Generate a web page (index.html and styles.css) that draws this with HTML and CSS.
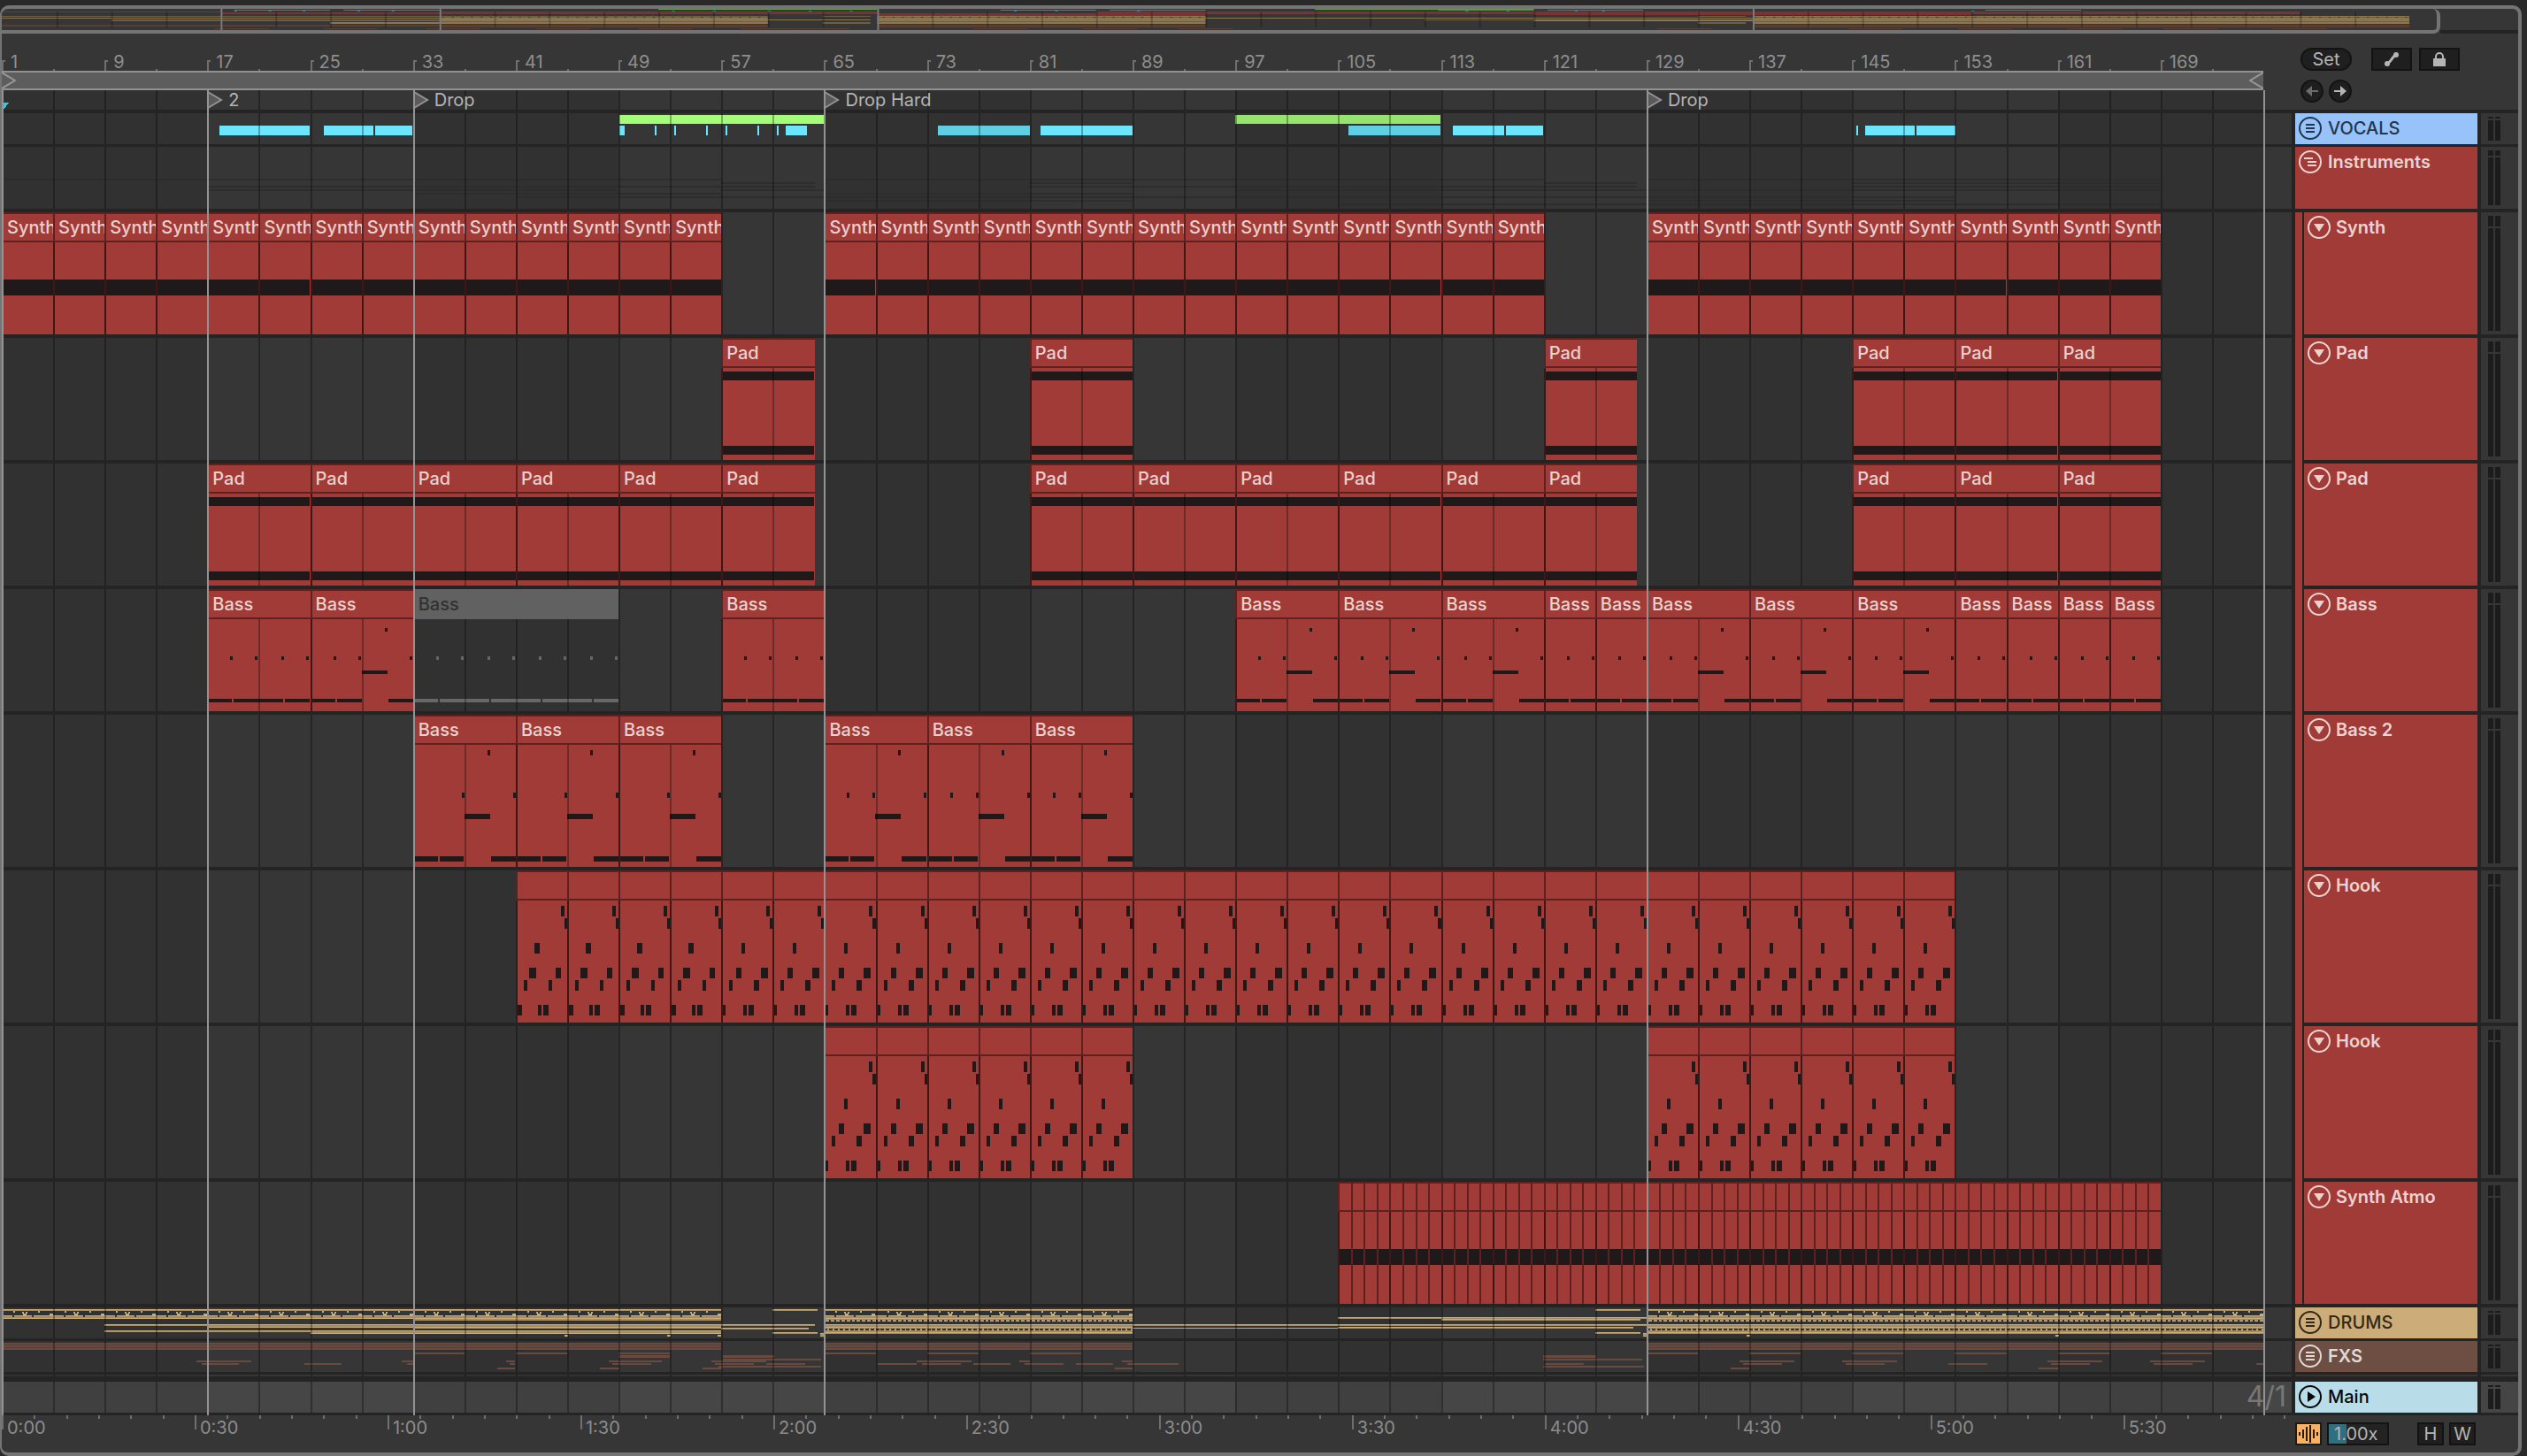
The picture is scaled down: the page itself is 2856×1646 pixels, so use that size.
FILE: index.html
```html
<!DOCTYPE html>
<html lang="en">
<head>
<meta charset="utf-8">
<title>Arrangement</title>
<link rel="stylesheet" href="styles.css">
</head>
<body>
<main class="window">
  <section class="overview" aria-label="Overview">
    <div class="overview-view"><svg id="overview" class="fill" viewBox="0 0 2750 24" preserveAspectRatio="none"></svg></div>
    <div class="overview-rest"></div>
  </section>

  <header class="top">
    <div class="top-left">
      <div class="bar-ruler" id="bar-ruler"></div>
      <div class="loop">
        <svg width="16" height="18" viewBox="0 0 16 18"><path d="M0 0L15 9L0 18" fill="none" stroke="#979797" stroke-width="2"/></svg>
        <svg width="16" height="18" viewBox="0 0 16 18"><path d="M16 0L1 9L16 18" fill="none" stroke="#979797" stroke-width="2"/></svg>
      </div>
      <div class="lane locators" id="locators"></div>
    </div>
    <div class="controls">
      <div class="control-row">
        <button class="pill">Set</button>
        <div class="toggles">
          <button class="square" aria-label="Automation mode"><svg width="18" height="18" viewBox="0 0 18 18"><path d="M4 14C9 12 9 6 14 4" fill="none" stroke="#b5b5b5" stroke-width="3"/><circle cx="4" cy="14" r="3" fill="#b5b5b5"/><circle cx="14" cy="4" r="3" fill="#b5b5b5"/></svg></button>
          <button class="square" aria-label="Lock envelopes"><svg width="16" height="18" viewBox="0 0 16 18"><path d="M4 9V6a4 4 0 0 1 8 0v3" fill="none" stroke="#b5b5b5" stroke-width="2"/><path d="M1 8h14v9H1z" fill="#b5b5b5"/></svg></button>
        </div>
      </div>
      <div class="control-row arrows">
        <button class="round dim" aria-label="Previous locator"><svg width="16" height="14" viewBox="0 0 16 14"><path d="M1 7L8 1V6H15V8H8V13Z" fill="currentColor"/></svg></button>
        <button class="round" aria-label="Next locator"><svg width="16" height="14" viewBox="0 0 16 14"><path d="M15 7L8 1V6H1V8H8V13Z" fill="currentColor"/></svg></button>
      </div>
    </div>
  </header>

  <section class="tracks" id="tracks"></section>

  <footer class="bottom">
    <div class="time-ruler" id="time-ruler"></div>
    <div class="zoom-controls">
      <button class="wave" aria-label="Waveform view"><svg width="24" height="20" viewBox="0 0 24 20"><path d="M2 8v4M6 5v10M10 2v16M14 0v20M18 5v10M22 8v4" stroke="#2a1c08" stroke-width="2"/></svg></button>
      <input class="speed" type="text" value="1.00x" aria-label="Waveform zoom">
      <button class="key">H</button>
      <button class="key">W</button>
    </div>
  </footer>
</main>
<script src="app.js"></script>
</body>
</html>
```
FILE: styles.css
```css
* { box-sizing: border-box; }

body {
  margin: 0;
  background: #292929;
  font-family: Inter, "Liberation Sans", sans-serif;
  font-size: 20px;
  line-height: 24px;
  color: #b5b5b5;
}

button, input {
  font: inherit;
  color: inherit;
  margin: 0;
  padding: 0;
}

.window {
  margin: 6px 6px 0 0;
  border: 4px solid #757475;
  border-left-width: 2px;
  border-radius: 10px;
  background: #363636;
  overflow: hidden;
}

.fill {
  display: block;
  width: 100%;
  height: 100%;
}

/* Overview */
.overview {
  display: flex;
  height: 28px;
}
.overview-view {
  flex: 0 0 96.9%;
  border: solid #757475;
  border-width: 0 4px 4px 0;
  border-radius: 0 8px 8px 0;
}
.overview-rest {
  flex: 1;
  border-bottom: 4px solid #242424;
}

/* Rulers and controls */
.top, .bottom, .track {
  display: grid;
  grid-template-columns: minmax(0, 1fr) 206px 42px;
  column-gap: 4px;
}
.top { height: 86px; }
.bar-ruler {
  display: grid;
  grid-template-columns: repeat(44, minmax(0, 1fr));
  height: 42px;
  margin-right: 32px;
  align-items: end;
  color: #8e8e8e;
}
.bar-tick {
  height: 2px;
  border-left: 2px solid #6f6f6f;
}
.bar-tick.major {
  height: 12px;
  white-space: nowrap;
  background: linear-gradient(#6f6f6f, #6f6f6f) 0 0 / 2px 2px no-repeat;
}
.bar-tick span {
  display: block;
  margin: -10px 0 0 8px;
}
.loop {
  display: flex;
  justify-content: space-between;
  height: 22px;
  margin-right: 32px;
  border: solid #919191;
  border-width: 2px 0;
  background: #5d5d5d;
}
.locators { height: 22px; }
.locator {
  display: flex;
  gap: 6px;
  z-index: 2;
  grid-row: 1;
  white-space: nowrap;
}
.locator span { height: 22px; line-height: 22px; }
.controls {
  grid-column: 2 / 4;
  padding: 16px 0 0 6px;
}
.control-row {
  display: flex;
  gap: 22px;
  margin-bottom: 10px;
}
.arrows { gap: 6px; }
.toggles { display: flex; gap: 8px; }
.controls button, .key, .speed {
  display: flex;
  align-items: center;
  justify-content: center;
  height: 26px;
  border: 2px solid #131313;
  background: #1f1f1f;
}
.controls .pill { width: 58px; border-radius: 13px; }
.square { width: 46px; }
.controls .round { width: 26px; border-radius: 50%; }
.controls .dim { color: #6c6c6c; }

/* Tracks */
.tracks {
  position: relative;
  background: #242424;
  padding: 4px 0;
  display: flex;
  flex-direction: column;
  gap: 4px;
}
.lane {
  position: relative;
  display: grid;
  grid-template-columns: repeat(704, minmax(0, 1fr));
  padding-right: 32px;
  background: #363636;
  overflow: hidden;
}
.layer {
  position: absolute;
  inset: 0 32px 0 0;
  width: calc(100% - 32px);
  height: 100%;
  overflow: visible;
}
.layer.lines { z-index: 1; }
.h-group { height: 34px; }
.h-mid { height: 70px; }
.h-track { height: 138px; }
.h-tall { height: 172px; }
.h-thin { height: 2px; }
.thin-row { margin-bottom: 2px; }

.clip {
  position: relative;
  grid-row: 1;
  display: flex;
  flex-direction: column;
  min-width: 0;
  background: #a03b37;
}
.clip-name {
  position: relative;
  z-index: 2;
  height: 34px;
  padding-left: 4px;
  border: solid #5e211f;
  border-width: 2px 0 2px 2px;
  background: #a03b37;
  color: #ebd0ce;
  font-weight: 500;
  line-height: 30px;
  white-space: nowrap;
  overflow: hidden;
}
.clip-body {
  flex: 1;
  min-height: 0;
  border-left: 2px solid #5e211f;
  fill: #1f1919;
}
.clip.muted { background: none; }
.muted .clip-name {
  background: #616161;
  border-color: #616161;
  color: #323232;
}
.muted .clip-body { border-color: transparent; fill: #676767; }

.signature {
  position: relative;
  grid-column: 1 / -1;
  justify-self: end;
  margin-right: -26px;
  font-size: 32px;
  line-height: 34px;
  color: #777;
}

/* Track headers */
.name {
  display: flex;
  gap: 7px;
  padding: 4px;
  font-weight: 600;
  line-height: 27px;
  background: #a03b37;
  color: #ecd3d1;
}
.name svg { flex: none; }
.name.child {
  gap: 6px;
  margin-left: 8px;
  border-left: 2px solid #242424;
}
.stem {
  margin: 0 0 -4px;
  background: linear-gradient(90deg, #a03b37 8px, transparent 8px);
}
.stem.last { margin: 0; }
.stem .name { height: calc(100% - 4px); }
.stem.last .name { height: 100%; }
.blue, .tan, .ice { font-weight: 500; }
.blue { background: #98c2fa; color: #22374d; }
.tan { background: #ccac78; color: #33291a; }
.brown { background: #6c4e43; color: #e2d8d4; }
.ice { background: #b9dce9; color: #080808; }
.meter {
  display: grid;
  grid-template-columns: 6px 6px;
  gap: 2px;
  padding: 4px 0 4px 8px;
  background: #363636;
}
.meter i { background: #1c1c1c; }
.h-group .meter { grid-template-rows: 2px 1fr; }
.h-mid .meter { grid-template-rows: 6px 1fr; }
.h-track .meter, .h-tall .meter { grid-template-rows: 12px 1fr; }
.main .meter { background: #454545; }
.plain { background: #363636; }

/* Locator lines over all lanes */
.cursor-lines {
  position: absolute;
  inset: -22px 288px 0 0;
  z-index: 3;
  display: grid;
  grid-template-columns: repeat(176, minmax(0, 1fr));
  pointer-events: none;
}
.cursor-lines i {
  grid-row: 1;
  border-left: 2px solid #939393;
  width: 2px;
}
.cursor-lines .song-end {
  grid-column: 176;
  justify-self: end;
  margin-right: -2px;
}

/* Bottom */
.bottom { height: 42px; }
.time-ruler {
  display: grid;
  grid-template-columns: repeat(72, calc(100% / 71.22));
  overflow: hidden;
  color: #8c8c8c;
}
.time-tick {
  height: 4px;
  border-left: 2px solid #6f6f6f;
  white-space: nowrap;
}
.time-tick.major { height: 16px; }
.time-tick span {
  display: block;
  padding: 2px 0 0 4px;
}
.zoom-controls {
  display: flex;
  padding-top: 8px;
}
.zoom-controls > * { flex: none; }
.wave {
  display: flex;
  align-items: center;
  justify-content: center;
  width: 30px;
  height: 26px;
  border: 2px solid #1b1b1b;
  background: #f9b164;
}
.zoom-controls .speed {
  width: 70px;
  margin: 0 32px 0 6px;
  padding: 0 6px;
  background: linear-gradient(90deg, #2f6f80 20px, #232323 20px);
}
.key { width: 30px; margin-right: 6px; }
```
FILE: app.js
```js
const BAR = 2556 / 176;
const HALF = 58;
const rect = (x, y, w, h, fill) =>
  `<rect x="${x}" y="${y}" width="${w}" height="${h}"${fill ? ` fill="${fill}"` : ''}/>`;
const barX = (bar) => (bar - 1) * BAR;
const range = (from, to, step) => {
  const out = [];
  for (let b = from; b < to; b += step) out.push(b);
  return out;
};
const layer = (cls, height, body) =>
  `<svg class="layer ${cls}" viewBox="0 0 2556 ${height}" preserveAspectRatio="none" shape-rendering="crispEdges">${body}</svg>`;

/* Backdrop shading of every second group of 16 bars, and the 4 bar grid */
function shade(height, color) {
  return layer('', height, range(1, 177, 32).map((b) => rect(barX(b), 0, 16 * BAR, height, color)).join(''));
}
function lines(height) {
  return layer('lines', height, `<g fill-opacity=".3">${range(1, 178, 4).map((b) => rect(barX(b), 0, 2, height)).join('')}</g>`);
}

/* Clips: [start, end, note pattern, label, muted] */
const clips = {
  synth: [...range(1, 57, 4), ...range(65, 121, 4), ...range(129, 169, 4)].map((b) => [b, b + 4, 'band', 'Synth']),
  pad1: [[57, 64.25], [81, 89], [121, 128.25], [145, 153], [153, 161], [161, 169]].map((c) => [...c, 'pad', 'Pad']),
  pad2: [[17, 25], [25, 33], [33, 41], [41, 49], [49, 57], [57, 64.25], [81, 89], [89, 97], [97, 105], [105, 113],
    [113, 121], [121, 128.25], [145, 153], [153, 161], [161, 169]].map((c) => [...c, 'pad', 'Pad']),
  bass: [[17, 25, 'AA'], [25, 33, 'AB'], [33, 49, 'AAAA', true], [57, 65, 'AA'], [97, 105, 'AB'], [105, 113, 'AB'],
    [113, 121, 'AB'], [121, 125, 'A'], [125, 129, 'A'], [129, 137, 'AB'], [137, 145, 'AB'], [145, 153, 'AB'],
    [153, 157, 'A'], [157, 161, 'A'], [161, 165, 'A'], [165, 169, 'A']].map((c) => [c[0], c[1], c[2], 'Bass', c[3]]),
  bass2: [33, 41, 49, 65, 73, 81].map((b) => [b, b + 8, b < 60 ? 'CD' : 'ED', 'Bass']),
  hook1: range(41, 153, 4).map((b) => [b, b + 4, 'hook', '']),
  hook2: [...range(65, 89, 4), ...range(129, 153, 4)].map((b) => [b, b + 4, 'hook', '']),
  atmo: range(105, 169, 1).map((b) => [b, b + 1, 'band', '']),
};

/* Notes of one 4 bar cell; y counts from the top of the lane */
const cells = {
  A: [[26, 76, 3, 4], [54, 76, 3, 4], [0, 124, 28, 4], [30, 124, 28, 4]],
  B: [[26, 44, 3, 4], [54, 76, 3, 4], [0, 92, 29, 4], [30, 124, 28, 4]],
  C: [[55, 88, 3, 6], [0, 160, 28, 6], [30, 160, 27, 6]],
  E: [[26, 88, 3, 6], [55, 88, 3, 6], [0, 160, 28, 6], [30, 160, 27, 6]],
  D: [[26, 40, 3, 6], [55, 88, 3, 6], [0, 112, 29, 6], [30, 160, 28, 6]],
};
const hookCells = [
  [[51, 40, 4, 12], [55, 54, 4, 12], [21, 82, 6, 12], [15, 110, 8, 12], [45, 110, 6, 12],
    [9, 124, 4, 12], [37, 124, 4, 12], [2, 152, 5, 12], [25, 152, 4, 12], [31, 152, 6, 12]],
  [[51, 40, 4, 12], [55, 54, 4, 12], [23, 82, 4, 12], [17, 110, 6, 12], [45, 110, 8, 12],
    [9, 124, 4, 12], [37, 124, 6, 12], [2, 152, 3, 12], [25, 152, 4, 12], [31, 152, 6, 12]],
];

function clipHtml([start, end, kind, label, muted], height) {
  const width = (end - start) * HALF / 4;
  let notes;
  if (kind === 'band') notes = rect(0, 76, width, 18);
  else if (kind === 'pad') notes = rect(0, 38, width, 10) + rect(0, 122, width, 10);
  else if (kind === 'hook') notes = hookCells[start < 57 ? 0 : 1].map((n) => rect(...n)).join('');
  else notes = [...kind].map((k, i) => cells[k].map(([x, y, w, h]) => rect(x + i * HALF, y, w, h)).join('')).join('');
  const col = (b) => (b - 1) * 4 + 1;
  return `<div class="clip${muted ? ' muted' : ''}" style="grid-column:${col(start)}/${col(end)}">` +
    `<div class="clip-name">${label}</div>` +
    `<svg class="clip-body" viewBox="2 34 ${width - 2} ${height - 34}" preserveAspectRatio="none" shape-rendering="crispEdges">${notes}</svg></div>`;
}

/* Folded vocals group */
function vocals() {
  const cyan = [[248, 350], [366, 422], [424, 466], [700, 706], [740, 742], [762, 764], [798, 800], [820, 822],
    [856, 858], [878, 880], [888, 912], [1060, 1164, 1], [1176, 1280], [1524, 1628, 1], [1642, 1700], [1702, 1744],
    [2098, 2100], [2108, 2164], [2166, 2210]];
  return rect(698, 2, 232, 10, '#a5fc7a') + rect(1394, 2, 232, 10, '#96e46f') +
    cyan.map(([a, b, dim]) => rect(a - 2, 14, b - a, 10, dim ? '#61cfe3' : '#6ce6fc')).join('');
}

/* Folded instruments group: one faint row per child track */
function instruments() {
  return Object.values(clips).map((list, i) =>
    list.map(([a, b]) => rect(barX(a), 36 + i * 4, (b - a) * BAR, 2, '#2d2d2d')).join('')).join('');
}

/* Folded drums group */
function drums() {
  const hi = '#ccac75';
  const lo = '#a68d61';
  const seg = (a, b, y, h) => {
    let out = rect(barX(a), y, (b - a) * BAR, h, lo);
    for (let k = 0; k < h; k += 3) out += rect(barX(a), y + k, (b - a) * BAR, 1, hi);
    return out;
  };
  let out = seg(1, 57, 2, 2) + seg(1, 33, 9, 4) + seg(33, 57, 9, 6) + seg(9, 17, 18, 2) + seg(17, 33, 18, 4) +
    seg(33, 57, 18, 5) + seg(9, 25, 25, 2) + seg(25, 57, 25, 4) +
    seg(57, 64.3, 18, 2) + seg(57, 63.8, 22, 2) + seg(61, 64.5, 2, 2) + seg(61, 64.5, 27, 2) +
    seg(64.7, 65, 28, 4) +
    seg(89, 129, 18, 2) + seg(89, 105, 22, 1) + seg(105, 129, 11, 2) + seg(105, 128, 21, 2) + seg(113, 128.5, 13, 2) +
    seg(125, 128.5, 2, 2) + seg(125, 128.5, 27, 2) + seg(128.7, 129, 28, 4);
  [[65, 89], [129, 177]].forEach(([a, b]) => {
    out += seg(a, b, 2, 2) + seg(a, b, 9, 7) + seg(a, b, 18, 11);
  });
  const scatter = (b) => {
    const x = barX(b);
    return [[13, 4, 2, 2], [41, 4, 2, 2], [23, 5, 2, 2], [27, 5, 2, 2], [24, 7, 4, 2], [54, 7, 4, 2]]
      .map(([dx, y, w, h]) => rect(x + dx, y, w, h, hi)).join('') +
      rect(x + 12, 9, 2, 2, '#343434') + rect(x + 34, 9, 2, 2, '#343434');
  };
  [...range(1, 57, 4), ...range(65, 89, 4), ...range(129, 177, 4)].forEach((b) => { out += scatter(b); });
  [...range(65, 89, 0.4), ...range(129, 177, 0.4)].forEach((b) => {
    out += rect(barX(b), 14, 2, 2, '#343434') + rect(barX(b), 23, 4, 2, '#343434');
  });
  [44.8, 52.8, 56.7, 136.8, 160.8].forEach((b) => { out += rect(barX(b), 30, 4, 2, hi); });
  return out;
}

/* Folded effects group */
function effects() {
  const c = '#684a40';
  let out = '';
  [[1, 57], [65, 89], [129, 177]].forEach(([a, b]) => {
    out += rect(barX(a), 2, (b - a) * BAR, 8, '#533f39');
    [2, 5, 8].forEach((y) => { out += rect(barX(a), y, (b - a) * BAR, 2, c); });
  });
  [33, 41, 49, 65, 73, 81, 129, 137, 145, 153, 161, 169].forEach((b) => { out += rect(barX(b), 13, 4 * BAR, 2, c); });
  out += rect(barX(49), 16, 4 * BAR, 2, c);
  const rows = {
    21: [[222, 284], [454, 467], [572, 582], [688, 748], [804, 866], [1036, 1098], [1152, 1164], [1268, 1280],
      [1966, 2028], [2082, 2144], [2314, 2376], [2430, 2492]],
    24: [[228, 270], [344, 386], [460, 467], [576, 582], [692, 736], [808, 852], [866, 910], [992, 1036], [1042, 1086],
      [1100, 1142], [1158, 1202], [1216, 1258], [1274, 1332], [1746, 1790], [1970, 2014], [2086, 2130], [2202, 2246],
      [2318, 2362], [2434, 2478], [2550, 2558]],
    29: [[562, 582], [678, 700], [794, 816], [1260, 1280], [1956, 1977], [2304, 2327]],
    27: [[812, 928], [1744, 1858]],
    16: [[817, 875], [1744, 1804]],
    19: [[817, 928], [1744, 1856]],
  };
  Object.entries(rows).forEach(([y, list]) => list.forEach(([a, b]) => { out += rect(a - 2, y, b - a, 2, c); }));
  return out;
}

const circle = '<circle cx="13" cy="13" r="12" fill="none" stroke="currentColor" stroke-width="2"/>';
const icons = {
  group: circle + '<path d="M8 9h10M8 13h10M8 17h10" stroke="currentColor" stroke-width="2"/>',
  open: circle + '<path d="M6 9h10M10 13h10M10 17h10" stroke="currentColor" stroke-width="2"/>',
  fold: circle + '<path d="M7 9h12l-6 9z" fill="currentColor"/>',
  play: circle + '<path d="M10 7v12l9-6z" fill="currentColor"/>',
};

const rows = [
  { name: 'VOCALS', icon: 'group', color: 'blue', size: 'group', h: 34, art: vocals },
  { name: 'Instruments', icon: 'open', color: '', size: 'mid', h: 70, art: instruments, stem: true },
  { name: 'Synth', size: 'track', h: 138, clips: 'synth' },
  { name: 'Pad', size: 'track', h: 138, clips: 'pad1' },
  { name: 'Pad', size: 'track', h: 138, clips: 'pad2' },
  { name: 'Bass', size: 'track', h: 138, clips: 'bass' },
  { name: 'Bass 2', size: 'tall', h: 172, clips: 'bass2' },
  { name: 'Hook', size: 'tall', h: 172, clips: 'hook1' },
  { name: 'Hook', size: 'tall', h: 172, clips: 'hook2' },
  { name: 'Synth Atmo', size: 'track', h: 138, clips: 'atmo', last: true },
  { name: 'DRUMS', icon: 'group', color: 'tan', size: 'group', h: 34, art: drums },
  { name: 'FXS', icon: 'group', color: 'brown', size: 'group', h: 34, art: effects },
  { thin: true, size: 'thin', h: 2 },
  { name: 'Main', icon: 'play', color: 'ice', size: 'group', h: 34, main: true },
];

function rowHtml(row) {
  const lane = `<div class="lane"${row.main ? ' style="background:#464646"' : ''}>` +
    shade(row.h, row.main ? '#404040' : '#313131') +
    (row.art ? layer('', row.h, row.art()) : '') +
    (row.clips ? clips[row.clips].map((c) => clipHtml(c, row.h)).join('') : '') +
    (row.main ? '<span class="signature">4/1</span>' : '') +
    lines(row.h) + '</div>';
  if (row.thin) return `<div class="track h-thin thin-row">${lane}<div class="plain"></div><div class="plain"></div></div>`;
  const icon = (name) => `<svg width="26" height="26" viewBox="0 0 26 26">${icons[name]}</svg>`;
  const head = row.clips
    ? `<div class="stem${row.last ? ' last' : ''}"><div class="name child">${icon('fold')}<span>${row.name}</span></div></div>`
    : `<div class="name ${row.color}">${icon(row.icon)}<span>${row.name}</span></div>`;
  return `<div class="track h-${row.size}${row.main ? ' main' : ''}">${lane}${head}<div class="meter"><i></i><i></i><i></i><i></i></div></div>`;
}

document.getElementById('tracks').innerHTML = rows.map(rowHtml).join('') +
  `<div class="cursor-lines">${[1, 17, 33, 65, 129].map((b) => `<i style="grid-column:${b}"></i>`).join('')}` +
  '<i class="song-end"></i></div>';

document.getElementById('bar-ruler').innerHTML = range(1, 177, 4).map((b) =>
  (b % 8 === 1 ? `<div class="bar-tick major"><span>${b}</span></div>` : '<div class="bar-tick"></div>')).join('');

const flag = '<svg width="18" height="22" viewBox="0 0 18 22"><path d="M1 2L16 11L1 20" fill="#5a5a5a" stroke="#939393" stroke-width="2"/></svg>';
document.getElementById('locators').innerHTML = shade(22, '#313131') + lines(22) +
  [[17, '2'], [33, 'Drop'], [65, 'Drop Hard'], [129, 'Drop']].map(([b, t]) =>
    `<div class="locator" style="grid-column:${(b - 1) * 4 + 1}/span 40">${flag}<span>${t}</span></div>`).join('') +
  layer('lines', 22, '<path d="M0 14h8l-5 7H0z" fill="#55bccf"/>');

document.getElementById('time-ruler').innerHTML = range(0, 72, 1).map((i) => {
  if (i % 6) return '<div class="time-tick"></div>';
  const s = i * 5;
  return `<div class="time-tick major"><span>${Math.floor(s / 60)}:${String(s % 60).padStart(2, '0')}</span></div>`;
}).join('');

/* Miniature of the whole arrangement */
(function overview() {
  const x = (b) => (b - 1) * 15.45;
  const seg = (a, b, y, h, f) => rect(x(a), y, x(b) - x(a), h, f);
  const red = '#7a3330', tan = '#8b7650', dim = '#6d5f45', brown = '#573f37', cyan = '#3b8491', green = '#639e48';
  let o = '';
  [[49, 65], [97, 113]].forEach(([a, b]) => { o += seg(a, b, 0, 1, green); });
  [[18, 25], [26, 33], [74, 81], [82, 89], [106, 113], [114, 121], [146, 153]].forEach(([a, b]) => { o += seg(a, b, 1, 1, cyan); });
  [18, 20.5, 23, 27, 29.5, 50, 53, 57, 60, 63, 75, 78, 84, 108, 111, 116, 118, 145].forEach((b) => { o += seg(b, b + 0.2, 2, 1, cyan); });
  o += seg(1, 17, 3, 1, red) + seg(17, 33, 4, 2, red) + seg(33, 49, 3, 3, red) + seg(49, 65, 3, 3, red) +
    seg(65, 81, 5, 3, red) + seg(81, 89, 3, 5, red) + seg(89, 113, 3, 3, red) + seg(113, 129, 3, 4, red) +
    seg(129, 145, 3, 4, red) + seg(145, 169, 3, 3, red);
  o += seg(1, 57, 8, 1, dim) + seg(1, 57, 10, 1, tan) + seg(9, 25, 12, 2, dim) + seg(17, 57, 12, 2, dim) +
    seg(25, 57, 15, 2, tan) + seg(33, 57, 11, 6, tan) + seg(57, 64.5, 12, 1, tan) + seg(61, 64.5, 8, 1, dim) +
    seg(61, 64.5, 15, 2, dim) + seg(65, 89, 8, 9, tan) + seg(89, 129, 10, 1, tan) + seg(105, 113, 12, 1, dim) +
    seg(113, 129, 12, 2, tan) + seg(125, 128.5, 8, 1, dim) + seg(125, 128.5, 15, 2, dim) + seg(129, 177, 8, 9, tan);
  [[33, 57], [65, 89], [129, 177]].forEach(([a, b]) => { o += seg(a, b, 14, 1, dim) + seg(a, b, 9, 1, dim); });
  range(1, 177, 0.7).forEach((b) => { if (b < 57 || (b > 65 && b < 89) || b > 129) o += seg(b, b + 0.15, 9, 1, '#3a3733'); });
  o += seg(1, 33, 18, 2, brown) + seg(33, 57, 18, 3, brown) + seg(65, 89, 18, 3, brown) + seg(129, 177, 18, 3, brown);
  [16.5, 24.5, 32, 40, 47.5, 55, 59, 72, 80, 87, 122, 136, 144, 152, 159, 167].forEach((b) => { o += seg(b, b + 4, 22, 1, brown); });
  range(5, 177, 4).forEach((b) => { o += `<rect x="${x(b)}" y="3" width="2" height="18" fill="#000" fill-opacity=".22"/>`; });
  [17, 33, 65, 129].forEach((b) => { o += rect(x(b), 0, 2, 24, '#7c7c7c'); });
  document.getElementById('overview').innerHTML = o;
}());
```
